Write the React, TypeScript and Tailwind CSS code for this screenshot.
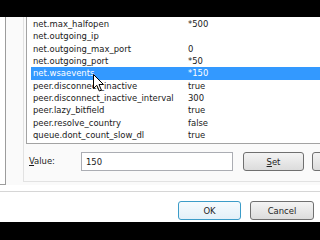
import { useState } from 'react';

const rows: [string, string][] = [
  ['net.max_halfopen', '*500'],
  ['net.outgoing_ip', ''],
  ['net.outgoing_max_port', '0'],
  ['net.outgoing_port', '*50'],
  ['net.wsaevents', '*150'],
  ['peer.disconnect_inactive', 'true'],
  ['peer.disconnect_inactive_interval', '300'],
  ['peer.lazy_bitfield', 'true'],
  ['peer.resolve_country', 'false'],
  ['queue.dont_count_slow_dl', 'true'],
];

const btn =
  'h-[19px] rounded-[3px] border border-[#707070] bg-gradient-to-b from-[#f4f4f4] to-[#dcdcdc] text-center leading-[17px] text-[#1e1e1e]';

const Cursor = () => (
  <svg
    className='absolute left-[93px] top-[74px]'
    width='12'
    height='18'
    viewBox='0 0 12 18'
  >
    <path
      d='M0.5 0.5 L0.5 14.5 L3.8 11.3 L6.3 17 L8.4 16.1 L6 10.5 L10.5 10.5 Z'
      fill='white'
      stroke='black'
      strokeWidth='1'
      strokeLinejoin='miter'
    />
  </svg>
);

const App = () => {
  const [selected, setSelected] = useState(4);
  const [value, setValue] = useState('150');

  return (
    <div
      className='relative w-[320px] h-[240px] overflow-hidden bg-white flex flex-col text-[9.4px] text-[#1a1a1a]'
      style={{ fontFamily: '"DejaVu Sans Condensed", "Liberation Sans", sans-serif' }}
    >
      <div className='h-[17px] bg-black shrink-0' />

      <div className='flex h-[168px] shrink-0'>
        <div className='w-[6px] shrink-0 border-r border-b border-[#9c9c9c] bg-white' />
        <div className='flex-1 min-w-0 overflow-hidden bg-[#fafafa] pl-[17px]'>
          <div className='h-[165px] border-l border-b border-[#e2e2e2] pl-[2px]'>
            <div className='h-[127px] border-l border-b border-[#a3a3a3] bg-white pl-[4px] pt-[1px] overflow-hidden'>
              {rows.map(([name, val], i) => (
                <div
                  key={name}
                  onClick={() => setSelected(i)}
                  className={
                    i === selected
                      ? 'flex h-[12.33px] items-center pl-[2px] bg-[#3399ff] text-white'
                      : 'flex h-[12.33px] items-center pl-[2px]'
                  }
                >
                  <span className='w-[155px] shrink-0 whitespace-nowrap'>{name}</span>
                  <span className='whitespace-nowrap'>{val}</span>
                </div>
              ))}
            </div>

            <div className='flex items-center mt-[8px] pl-[3px]'>
              <span className='w-[52px] shrink-0'>
                <span className='underline'>V</span>alue:
              </span>
              <input
                value={value}
                onChange={(e) => setValue(e.target.value)}
                className='w-[152px] shrink-0 h-[19px] border border-[#abadb3] bg-white px-[4px] text-[9.4px] outline-none'
              />
              <button className={`${btn} shrink-0 ml-[10px] w-[61px] h-[18px] leading-[16px]`}>
                <span className='underline'>S</span>et
              </button>
              <button className={`${btn} ml-[8px] w-[40px] h-[18px] shrink-0`} />
            </div>
          </div>
        </div>
      </div>

      <div className='h-[6px] shrink-0' />
      <div className='h-px bg-[#d6d6d6] shrink-0' />
      <div className='h-[30px] shrink-0 flex pt-[9px] pl-[178px] gap-[9px]'>
        <button className='w-[63px] h-[19px] rounded-[3px] border border-[#3c9cc8] bg-gradient-to-b from-[#f5fbfe] to-[#e3f0f8] text-center leading-[17px] text-[#1e1e1e]'>
          OK
        </button>
        <button className={`${btn} w-[64px]`}>Cancel</button>
      </div>
      <div className='flex-1 bg-black' />

      <Cursor />
    </div>
  );
};

export default App;
